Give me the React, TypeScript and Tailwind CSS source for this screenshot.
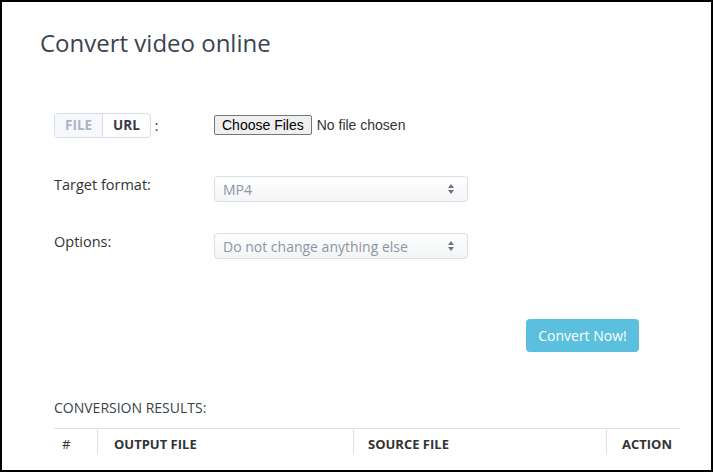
const selectClass =
  "flex items-center justify-between w-[254px] h-[26px] px-2 rounded-[4px] border border-[#d9dee5] bg-gradient-to-b from-white to-[#f3f4f6] text-[14px] text-[#8c96a3]";

const Arrows = () => (
  <svg width="8" height="12" viewBox="0 0 8 12" className="mr-1">
    <path d="M4 1 L7 5 H1 Z" fill="#6b7480" />
    <path d="M4 11 L7 7 H1 Z" fill="#6b7480" />
  </svg>
);

export default function App() {
  return (
    <div
      className="w-[713px] h-[472px] border-2 border-black bg-white overflow-hidden"
      style={{ fontFamily: '"Open Sans", "Liberation Sans", sans-serif' }}
    >
      <div className="pl-[38px] pt-[26px]">
        <h1 className="text-[24px] text-[#3b4350] leading-[30px]">Convert video online</h1>
      </div>

      <div className="pl-[52px] pr-[31px] mt-[54px]">
        <div className="flex items-center h-[26px]">
          <div className="w-[160px] flex items-center">
            <div className="flex h-[25px] rounded-[4px] border border-[#d5dde7] text-[13.5px] font-bold overflow-hidden">
              <span className="px-[10px] flex items-center bg-[#f6f8fb] text-[#a9b6c5]">FILE</span>
              <span className="px-[10px] flex items-center border-l border-[#d5dde7] text-[#333c48]">URL</span>
            </div>
            <span className="ml-[4px] text-[14px] text-[#333]">:</span>
          </div>
          <input
            type="file"
            multiple
            className="text-[14px] leading-[16px] text-[#333] file:mr-[5px] file:px-[7px] file:py-[1px] file:border file:border-[#767676] file:rounded-[2px] file:bg-[#efefef] file:text-black"
            style={{ fontFamily: '"Liberation Sans", Arial, sans-serif' }}
          />
        </div>

        <div className="flex items-center mt-[38px]">
          <label className="w-[160px] text-[14.5px] leading-[20px] text-[#333] -mt-[8px]">Target format:</label>
          <div className={selectClass}>
            <span>MP4</span>
            <Arrows />
          </div>
        </div>

        <div className="flex items-center mt-[31px]">
          <label className="w-[160px] text-[14.5px] leading-[20px] text-[#333] -mt-[8px]">Options:</label>
          <div className={selectClass}>
            <span>Do not change anything else</span>
            <Arrows />
          </div>
        </div>

        <div className="flex justify-end mt-[60px] pr-[41px]">
          <button className="h-[33px] w-[113px] rounded-[4px] bg-[#5bc0de] text-white text-[14px]">
            Convert Now!
          </button>
        </div>

        <div className="mt-[46px] text-[14px] leading-[20px] text-[#3a3f47] uppercase">Conversion results:</div>

        <div className="mt-[10px] w-[626px] border-t border-[#dde1e6] grid grid-cols-[43px_256px_253px_74px] text-[13px] font-bold text-[#333]">
          <div className="pl-[8px] pt-[6px] font-normal text-[13px]">#</div>
          <div className="border-l border-[#dde1e6] pl-[16px] pt-[6px]">OUTPUT FILE</div>
          <div className="border-l border-[#dde1e6] pl-[14px] pt-[6px]">SOURCE FILE</div>
          <div className="border-l border-[#dde1e6] pl-[15px] pt-[6px]">ACTION</div>
        </div>
      </div>
    </div>
  );
}
